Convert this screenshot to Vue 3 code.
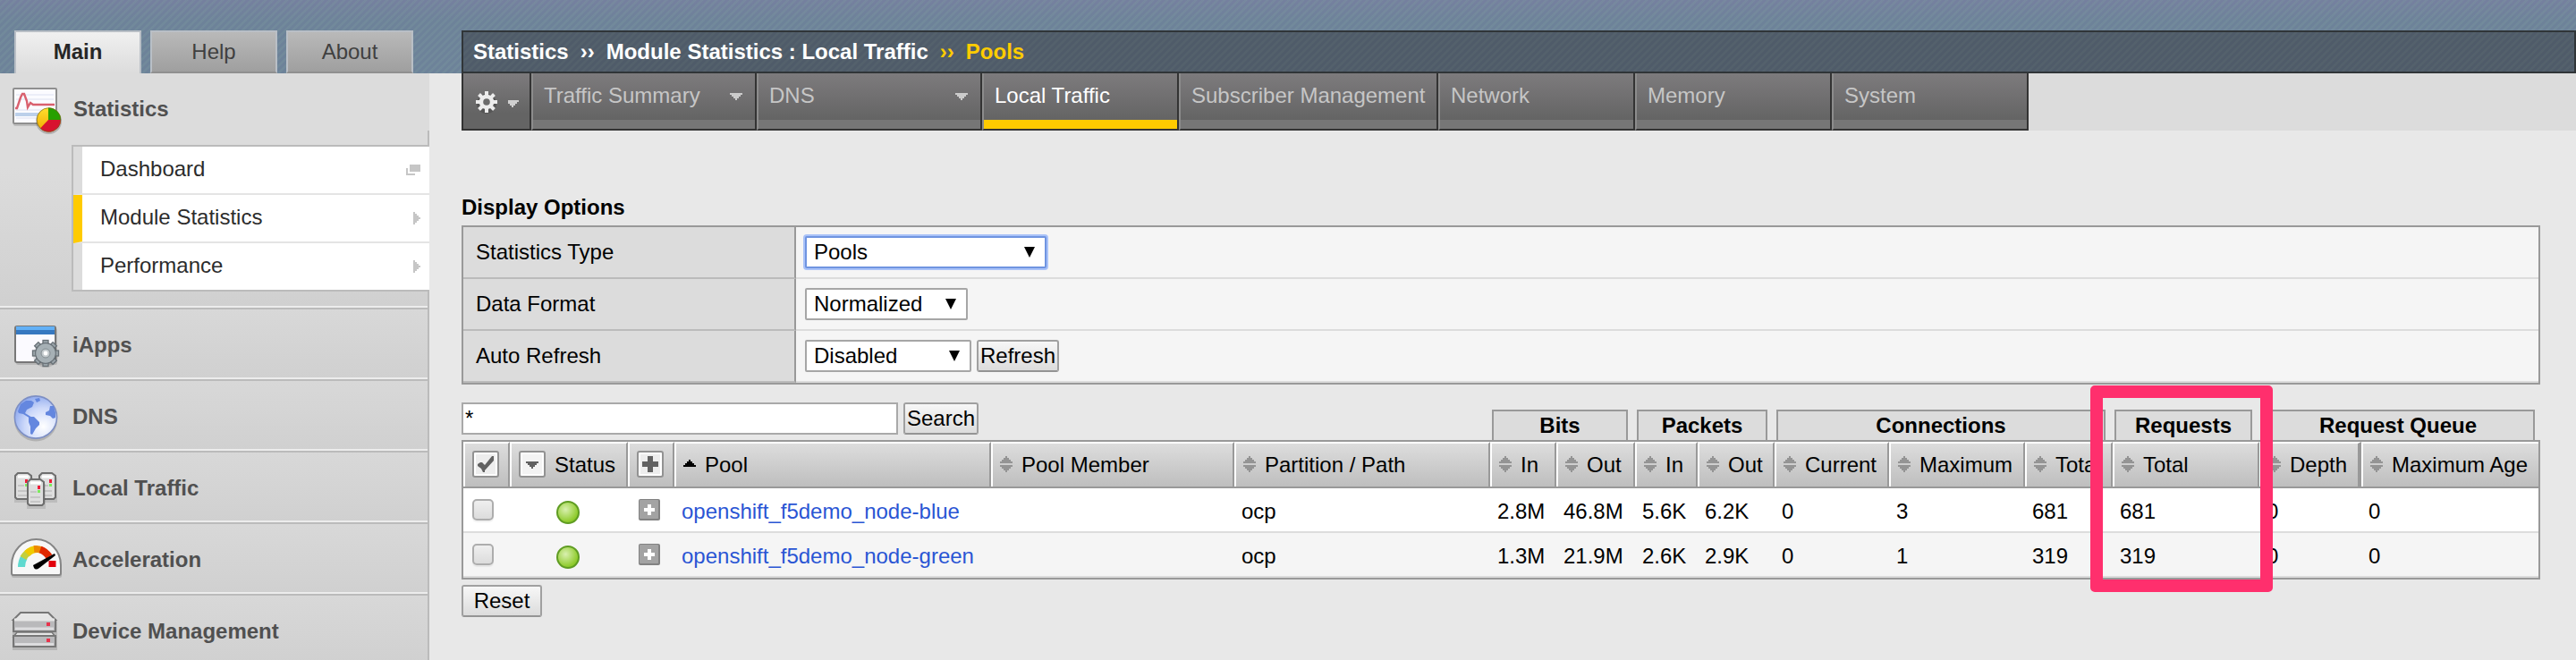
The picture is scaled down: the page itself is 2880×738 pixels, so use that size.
<script setup>
const tabs = [
  { label: 'Main', active: true },
  { label: 'Help' },
  { label: 'About' },
]

const submenu = [
  { label: 'Dashboard', icon: 'window' },
  { label: 'Module Statistics', icon: 'arrow', active: true },
  { label: 'Performance', icon: 'arrow' },
]

const sections = [
  { label: 'iApps', icon: 'iapps' },
  { label: 'DNS', icon: 'dns' },
  { label: 'Local Traffic', icon: 'ltm' },
  { label: 'Acceleration', icon: 'accel' },
  { label: 'Device Management', icon: 'device' },
]

const menu = [
  { label: 'Traffic Summary', wide: true, arrow: true },
  { label: 'DNS', wide: true, arrow: true },
  { label: 'Local Traffic', active: true },
  { label: 'Subscriber Management', fit: true },
  { label: 'Network' },
  { label: 'Memory' },
  { label: 'System' },
]

const groups = [
  { label: 'Bits', cls: 'g-bits' },
  { label: 'Packets', cls: 'g-packets' },
  { label: 'Connections', cls: 'g-conn' },
  { label: 'Requests', cls: 'g-req' },
  { label: 'Request Queue', cls: 'g-queue' },
]

const columns = [
  'Pool Member', 'Partition / Path', 'In', 'Out', 'In', 'Out',
  'Current', 'Maximum', 'Total', 'Total', 'Depth', 'Maximum Age',
]

const rows = [
  { pool: 'openshift_f5demo_node-blue', cells: ['', 'ocp', '2.8M', '46.8M', '5.6K', '6.2K', '0', '3', '681', '681', '0', '0'] },
  { pool: 'openshift_f5demo_node-green', cells: ['', 'ocp', '1.3M', '21.9M', '2.6K', '2.9K', '0', '1', '319', '319', '0', '0'] },
]

const teeth = [0, 45, 90, 135, 180, 225, 270, 315]
</script>

<template>
  <div class="page">
    <aside class="side">
      <nav class="tabs">
        <div v-for="t in tabs" :key="t.label" class="tab" :class="{ active: t.active }">{{ t.label }}</div>
      </nav>
      <div class="panel">
        <div class="head">
          <svg class="icon" width="62" height="80" viewBox="10 82 62 80">
            <defs>
              <linearGradient id="pieY" x1="0" y1="0" x2="0" y2="1"><stop offset="0" stop-color="#ffdf2e" /><stop offset="1" stop-color="#f0a800" /></linearGradient>
            </defs>
            <rect x="15" y="101" width="49" height="40" rx="2" fill="#000" opacity=".14" />
            <rect x="15" y="99" width="48" height="39" rx="1" fill="#fbfbff" stroke="#8f8f8f" stroke-width="2" />
            <path d="M18 106h42M18 111h42M18 123h34M18 132h28" stroke="#eceef8" stroke-width="2" />
            <path d="M17 128h28" stroke="#bcd0ea" stroke-width="4" />
            <path d="M17 121h2l4-12 2-4h2l3 8 1 7 3-5 3 2h24" fill="none" stroke="#d9606e" stroke-width="2.4" />
            <circle cx="54.5" cy="135.5" r="14.5" fill="#000" opacity=".2" />
            <circle cx="54.5" cy="134" r="13.5" fill="url(#pieY)" />
            <path d="M54 134V120.5A13.5 13.5 0 0 1 68 134z" fill="#27a000" />
            <path d="M54 134H68A13.5 13.5 0 0 1 45 143.5z" fill="#d8132f" />
            <circle cx="54.5" cy="134" r="13.3" fill="none" stroke="#6b5a20" stroke-opacity=".6" />
          </svg>
          <span>Statistics</span>
        </div>
        <div class="submenu">
          <div v-for="s in submenu" :key="s.label" class="sub" :class="{ active: s.active }">
            <span>{{ s.label }}</span>
            <svg v-if="s.icon === 'window'" width="16" height="12" viewBox="0 0 16 12"><path d="M4 0h12v8H4zM0 4h2v6h8v2H0z" fill="#c6c6c6" /></svg>
            <svg v-else width="8" height="14" viewBox="0 0 8 14"><path d="M0 0h2v2h2v2h2v2h2v2H6v2H4v2H2v2H0z" fill="#c6c6c6" /></svg>
          </div>
        </div>
      </div>
      <div v-for="s in sections" :key="s.label" class="section">
        <svg v-if="s.icon === 'iapps'" class="icon" width="62" height="76" viewBox="10 346 62 76">
          <rect x="18" y="367" width="46" height="41" rx="2" fill="#000" opacity=".13" />
          <rect x="17" y="365" width="45" height="40" rx="2" fill="#fbfaff" stroke="#777" stroke-width="2" />
          <path d="M18 365h43v4H18z" fill="#62b0f6" />
          <path d="M18 369h43v5H18z" fill="#3678c0" />
          <g transform="translate(51 395)">
            <circle cy="2" r="14" fill="#000" opacity=".12" />
            <g fill="#9aa4aa" stroke="#687076" stroke-width="1.3">
              <rect v-for="a in teeth" :key="a" x="-3" y="-14.5" width="6" height="8" :transform="`rotate(${a})`" />
              <circle r="11.3" />
            </g>
            <circle r="10.6" fill="#a6b0b5" />
            <circle r="5" fill="#c4cbce" stroke="#848d92" />
            <circle r="2.4" fill="#fff" />
          </g>
        </svg>
        <svg v-else-if="s.icon === 'dns'" class="icon" width="62" height="76" viewBox="10 426 62 76">
          <defs>
            <radialGradient id="globe" cx=".68" cy=".72" r=".8"><stop offset="0" stop-color="#fff" /><stop offset=".55" stop-color="#cdd9fa" /><stop offset="1" stop-color="#88a4ec" /></radialGradient>
          </defs>
          <ellipse cx="40" cy="470" rx="24" ry="23.5" fill="#000" opacity=".15" />
          <circle cx="40" cy="466.5" r="23.6" fill="url(#globe)" stroke="#7d8fc4" stroke-width="1.6" />
          <path d="M20 460l3-8 6-4h6l3 2-2 5-6 3-2 4 5 3 3 2-2 1-8-5-5-1zM32 466l6 0 6 6v3l-4 4-4 7-2-1 0-8-2-5zM51 461l4-2 1-5 4 0 2 7v6l-3 1-3-3-5-1zM39 446l5-1 1 3-4 2z" fill="#6487df" />
        </svg>
        <svg v-else-if="s.icon === 'ltm'" class="icon" width="62" height="76" viewBox="10 506 62 76">
          <g v-for="(p, i) in [[16, 528], [43, 528], [30, 535]]" :key="i" :transform="`translate(${p[0]} ${p[1]})`">
            <path d="M0 6h21v28H0z" fill="#000" opacity=".1" />
            <path d="M1 28V4l3-3h11l4 3v24l-2 2H3z" fill="#dedede" stroke="#6e6e6e" stroke-width="2" />
            <path d="M4 5h12" stroke="#fff" stroke-width="3" />
            <path d="M4 15h7M4 21h11M4 26h11" stroke="#c6c6c6" stroke-width="2" />
            <path d="M12 8h3v4h-3z" fill="#f01c38" /><path d="M12 13h3v3h-3z" fill="#7cea5c" />
          </g>
        </svg>
        <svg v-else-if="s.icon === 'accel'" class="icon" width="62" height="76" viewBox="10 586 62 76">
          <path d="M13 635a27.5 29 0 0 1 56 0v9q0 2-2 2H15q-2 0-2-2z" fill="#000" opacity=".14" />
          <path d="M13 632a27.5 29 0 0 1 55 0v9q0 2-2 2H15q-2 0-2-2z" fill="#f7f7f7" stroke="#858585" stroke-width="2" />
          <g fill="none" stroke-width="8">
            <path d="M24 634q0-6 3-11" stroke="#5fd9cf" />
            <path d="M26 624q3-5 7-7" stroke="#c4cf3c" />
            <path d="M30 619q5-5 12-5" stroke="#efcb00" />
            <path d="M38 614q5-.5 8 1" stroke="#ee8a00" />
            <path d="M45 614.500q6 2 10 8" stroke="#e02800" />
            <path d="M58.500 627v7" stroke="#e2000c" />
          </g>
          <path d="M37 632l24-13 1 2-18 14q-4 3-6 0z" fill="#000" />
        </svg>
        <svg v-else class="icon" width="62" height="76" viewBox="10 666 62 76">
          <path d="M14 693h50v34H14z" fill="#000" opacity=".13" />
          <path d="M15 693l8-8h31l8 8z" fill="#e6e6e6" stroke="#777" stroke-width="2" />
          <path d="M15 693h47v13H15z" fill="#b9b9bb" stroke="#777" stroke-width="2" />
          <path d="M15 712l4-5h39l4 5z" fill="#e6e6e6" stroke="#777" stroke-width="1.500" />
          <path d="M15 711h47v12H15z" fill="#b9b9bb" stroke="#777" stroke-width="2" />
          <path d="M16 693h45" stroke="#e6e6e6" stroke-width="3" />
          <path d="M17 703h43M17 720.500h43" stroke="#dcdcde" stroke-width="3" />
          <path d="M52 696h4v4h-4zM52 714h4v4h-4z" fill="#e8334c" />
        </svg>
        <span>{{ s.label }}</span>
      </div>
    </aside>

    <main class="main">
      <div class="crumbs">
        <span>Statistics</span><i>››</i><span>Module Statistics : Local Traffic</span><i class="on">››</i><span class="on">Pools</span>
      </div>
      <nav class="menubar">
        <div class="gearcell">
          <svg width="66" height="46" viewBox="520 92 66 46">
            <g transform="translate(544 114)">
              <circle r="11" cy="2" fill="#555" />
              <g fill="#ececec">
                <rect v-for="a in teeth" :key="a" x="-2" y="-12" width="4" height="6" :transform="`rotate(${a})`" />
                <circle r="8.300" />
              </g>
              <circle r="3.800" fill="#6a6a6a" />
            </g>
            <path d="M568 112h12v2h-2v2h-2v2h-2v2h-2v-2h-2v-2h-2z" fill="#cfcfcf" />
          </svg>
        </div>
        <div v-for="m in menu" :key="m.label" class="mtab" :class="{ wide: m.wide, fit: m.fit, active: m.active }">
          <span>{{ m.label }}</span>
          <svg v-if="m.arrow" width="14" height="8" viewBox="0 0 14 8"><path d="M0 0h14v2h-2v2h-2v2H8v2H6V6H4V4H2V2H0z" fill="#cbcbcb" /></svg>
        </div>
        <div class="fill"></div>
      </nav>

      <h2>Display Options</h2>
      <div class="options">
        <div class="opt">
          <label>Statistics Type</label>
          <div class="val"><div class="select focus s1">Pools<b></b></div></div>
        </div>
        <div class="opt">
          <label>Data Format</label>
          <div class="val"><div class="select s2">Normalized<b></b></div></div>
        </div>
        <div class="opt">
          <label>Auto Refresh</label>
          <div class="val"><div class="select s3">Disabled<b></b></div><div class="btn refresh">Refresh</div></div>
        </div>
      </div>

      <div class="tools">
        <div class="input">*</div>
        <div class="btn search">Search</div>
        <div class="groups">
          <div v-for="g in groups" :key="g.label" class="group" :class="g.cls">{{ g.label }}</div>
        </div>
      </div>

      <div class="grid">
        <div class="gr gh">
          <div class="c pad"><svg width="30" height="30" viewBox="0 0 30 30"><rect x="1" y="1" width="28" height="28" rx="2" fill="#fff" stroke="#929292" stroke-width="2" /><rect x="4" y="4" width="22" height="22" fill="#ededed" /><path d="M6 15l3-2h2l3 3 8-10h2v5L14 22v2h-2l-2-4-4-3z" fill="#616161" /></svg></div>
          <div class="c pad"><svg width="30" height="30" viewBox="0 0 30 30"><rect x="1" y="1" width="28" height="28" rx="2" fill="#fff" stroke="#929292" stroke-width="2" /><rect x="4" y="4" width="22" height="22" fill="#f3f3f3" /><path d="M8 12h14v2h-2v2h-2v2h-2v2h-2v-2h-2v-2h-2v-2H8z" fill="#616161" /></svg><span class="status">Status</span></div>
          <div class="c pad"><svg width="30" height="30" viewBox="0 0 30 30"><rect x="1" y="1" width="28" height="28" rx="2" fill="#fff" stroke="#929292" stroke-width="2" /><rect x="4" y="4" width="22" height="22" fill="#ededed" /><path d="M12 6h6v6h6v6h-6v6h-6v-6H6v-6h6z" fill="#616161" /></svg></div>
          <div class="c pad"><svg class="up" width="14" height="8" viewBox="0 0 14 8"><path d="M6 0h2v2h2v2h2v2h2v2H0V6h2V4h2V2h2z" /></svg><span class="up-t">Pool</span></div>
          <div v-for="(c, i) in columns" :key="i" class="c pad"><svg width="14" height="18" viewBox="0 0 14 18"><path d="M6 0h2v2h2v2h2v2h2v2H0V6h2V4h2V2h2zM0 10h14v2h-2v2h-2v2H8v2H6v-2H4v-2H2v-2H0z" fill="#949494" /></svg><span>{{ c }}</span></div>
        </div>
        <div v-for="(r, ri) in rows" :key="ri" class="gr row">
          <div class="c"><i class="check"></i></div>
          <div class="c ballcell"><i class="ball"></i></div>
          <div class="c pluscell"><svg width="24" height="24" viewBox="0 0 24 24"><rect width="24" height="24" rx="2" fill="#828282" /><rect x="1" y="1" width="21" height="21" rx="1" fill="#a3a3a3" /><path d="M10 6h4v4h4v4h-4v4h-4v-4H6v-4h4z" fill="#fff" /></svg></div>
          <div class="c link">{{ r.pool }}</div>
          <div v-for="(v, i) in r.cells" :key="i" class="c">{{ v }}</div>
        </div>
        <div class="callout"></div>
      </div>
      <div class="btn reset">Reset</div>
    </main>
  </div>
</template>

<style>
html, body { margin: 0; background: #e8e8e8; overflow: hidden; }
</style>

<style scoped>
* { box-sizing: border-box; }
.page {
  width: 2880px; height: 738px; overflow: hidden; display: flex; gap: 36px;
  font-family: "Liberation Sans", Arial, sans-serif; font-size: 24px; line-height: 44px; color: #000; white-space: nowrap;
  background:
    repeating-linear-gradient(135deg, rgba(125, 155, 160, .3) 0 1.6px, rgba(125, 155, 160, 0) 2.6px 4.6px, rgba(125, 155, 160, .3) 5.657px) 0 0 / 100% 82px no-repeat,
    linear-gradient(#75809f, #6d8299 24px, #6d8299) 0 0 / 100% 82px no-repeat,
    #e8e8e8;
}
svg { display: block; flex: none; }

/* sidebar */
.side { width: 480px; flex: none; padding-top: 34px; }
.tabs { display: flex; gap: 10px; padding-left: 16px; height: 48px; }
.tab {
  width: 142px; text-align: center; color: #404040; line-height: 44px; height: 48px;
  border: 2px solid #b9bfc6; border-bottom: 2px solid #909090; background: linear-gradient(#b9b9b9, #9f9f9f);
}
.tab.active { font-weight: bold; color: #262626; background: linear-gradient(#f0f0f0, #dcdcdc); border-bottom: 0; }
.panel { height: 264px; background: linear-gradient(#dcdcdc 0 40%, #d0d0d0); border-bottom: 2px solid #bbb; box-shadow: inset 0 -2px #ececec; padding-bottom: 18px; position: relative; }
.panel::after { content: ""; position: absolute; right: 0; top: 64px; width: 2px; height: 18px; background: #bbb; }
.panel::before { content: ""; position: absolute; right: 0; top: 244px; width: 2px; height: 18px; background: #bbb; }
.head { height: 80px; }
.head, .section { display: flex; padding-left: 10px; font-weight: bold; color: #505050; line-height: 79px; }
.icon { margin-right: 9px; }
.head .icon { margin-right: 10px; }
.section {
  height: 80px; background: linear-gradient(#d8d8d8, #d0d0d0); line-height: 79px;
  border-right: 2px solid #bbb; border-bottom: 2px solid #bbb; box-shadow: inset 0 -2px #ececec;
}
.submenu { margin-left: 80px; border: 2px solid #bbb; border-right: 0; height: 164px; }
.sub {
  height: 54px; display: flex; align-items: center; justify-content: space-between; padding: 0 10px 0 20px;
  background: #fff; border-left: 10px solid #dcdcdc; border-bottom: 2px solid #e4e4e4; color: #2c2c2c; line-height: 50px;
}
.sub:last-child { height: 52px; border-bottom: 0; }
.sub.active { border-left-color: #ffcb00; }
.sub span { height: 52px; }

/* main */
.main { width: 2364px; flex: none; padding-top: 34px; }
.crumbs {
  height: 48px; border: 2px solid #303538; padding-left: 11px; display: flex; color: #fff; font-weight: bold; line-height: 44px;
  background: repeating-linear-gradient(135deg, #54616c 0 1.600px, #4f5b69 2.600px 4.600px, #54616c 5.657px);
}
.crumbs i { font-style: normal; width: 42px; text-align: center; }
.crumbs .on { color: #ffcc00; }
.menubar { height: 64px; display: flex; }
.gearcell { width: 78px; border: 2px solid #333; border-top: 0; background: linear-gradient(#7d7b7d, #646464 72%, #646464); display: flex; padding: 10px 0 0 2px; }
.mtab {
  width: 220px; height: 64px; display: flex; justify-content: space-between; padding: 0 14px 0 12px; color: #c6c6c6; line-height: 50px;
  border-left: 2px solid #8c8c8c; border-right: 2px solid #333; border-bottom: 2px solid #333;
  background: linear-gradient(#767676, #767676) 0 52px / 100% 10px no-repeat, linear-gradient(#7d7b7d, #646464 52px);
}
.mtab svg { margin-top: 22px; }
.mtab.wide { width: 252px; }
.mtab.fit { width: 290px; }
.mtab.active { color: #fff; background: linear-gradient(#ffcb00, #ffcb00) 0 52px / 100% 10px no-repeat, linear-gradient(#7d7b7d, #646464 52px); }
.fill { flex: 1; background: #dcdcdc; }
h2 { margin: 68px 0 0; height: 38px; font-size: 24px; line-height: 35px; font-weight: bold; }

.options { width: 2324px; border: 2px solid #999; }
.opt { display: flex; height: 58px; }
.opt label { width: 372px; padding-left: 14px; background: #dcdcdc; border-bottom: 2px solid #bbb; border-right: 2px solid #999; line-height: 55px; }
.val { flex: 1; display: flex; background: #f5f5f5; border-bottom: 2px solid #dcdcdc; padding: 10px 0 0 10px; gap: 6px; }
.select { height: 36px; border: 2px solid #a6a6a6; border-radius: 2px; background: #fff; padding: 0 9px 0 8px; display: flex; justify-content: space-between; line-height: 31px; }
.select b { width: 0; height: 0; border: 6.500px solid transparent; border-top: 12px solid #000; border-bottom: 0; margin-top: 10px; }
.focus { border-color: #6f94e0; box-shadow: 0 0 0 2px #a9c2f8; }
.s1 { width: 270px; padding-right: 11px; }
.s2 { width: 182px; padding-right: 11px; }
.s3 { width: 186px; padding-right: 11px; }
.btn { height: 36px; border: 2px solid #a0a0a0; border-bottom-color: #949494; border-radius: 3px; background: linear-gradient(#f7f7f7, #dcdcdc); text-align: center; line-height: 31px; }
.refresh { width: 92px; }

.tools { display: flex; height: 42px; margin-top: 20px; }
.input { width: 488px; height: 36px; border: 2px solid #a9a9a9; background: #fff; padding-left: 2px; line-height: 31px; }
.search { width: 84px; margin-left: 6px; }
.groups { display: flex; margin: 8px 0 0 574px; height: 34px; }
.group { border: 2px solid #999; border-bottom: 0; background: #dcdcdc; font-weight: bold; text-align: center; line-height: 31px; }
.g-bits { width: 152px; }
.g-packets { width: 146px; margin-left: 10px; }
.g-conn { width: 368px; margin-left: 10px; }
.g-req { width: 154px; margin-left: 10px; }
.g-queue { width: 306px; margin-left: 10px; }

.grid { width: 2324px; border: 2px solid #999; position: relative; }
.gr { display: grid; grid-template-columns: 52px 132px 52px 354px 272px 286px 74px 88px 70px 86px 128px 152px 98px 164px 114px 198px; }
.gh { height: 52px; border-bottom: 2px solid #999; background: linear-gradient(#dedede, #bebebe); }
.gh .c { border-top: 2px solid #fff; border-left: 2px solid #fff; border-right: 2px solid #999; line-height: 47px; display: flex; padding-left: 8px; }
.gh .c:nth-child(15) { border-right-width: 4px; }
.gh .c:last-child { border-right: 0; }
.gh svg { margin: 8px 10px 0 0; }
.gh .c:nth-child(n+5) svg { margin: 14px 10px 0 0; }
.gh .c svg.up { margin: 18px 10px 0 0; }
.row { height: 50px; background: #fff; border-bottom: 2px solid #dcdcdc; line-height: 51px; }
.row:nth-child(3) { background: #f5f5f5; }
.row .c { padding-left: 8px; height: 48px; }
.link { color: #2a55d4; }
.check { display: block; width: 24px; height: 24px; margin: 12px 0 0 2px; border: 2px solid #adadad; border-radius: 5px; background: linear-gradient(#efefef, #dcdcdc); box-shadow: 0 2px 1px rgba(0, 0, 0, .06); }
.ball { display: block; width: 26px; height: 26px; border-radius: 50%; margin: 14px 0 0 44px; border: 2px solid #5f9c22; background: radial-gradient(circle at 38% 35%, #d9f0b0, #8fcb2c 70%, #74b81a); }
.pluscell svg { margin: 12px 0 0 4px; }
.callout { position: absolute; left: 1819px; top: -63px; width: 204px; height: 231px; border: 14px solid #ff2f6d; border-radius: 5px; }
.reset { width: 90px; margin-top: 6px; }
</style>
